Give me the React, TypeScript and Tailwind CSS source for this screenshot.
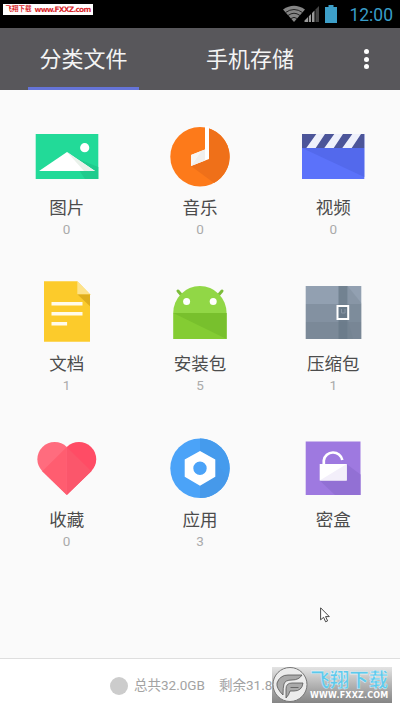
import React from "react";

const sans = "font-['Roboto','Noto_Sans_CJK_SC',sans-serif]";

const PictureIcon = () => (
  <svg viewBox="0 0 64 64" className="size-16">
    <path d="M.7 9h62.6v45H.7z" fill="#22da98" />
    <path d="M32 27l11 7 20.3 8v12H50z" fill="#1fcb8d" />
    <path d="M32 27L4 46h56z" fill="#fff" />
    <path d="M32 27l28 19H49z" fill="#e9f1ea" />
    <circle cx="49.7" cy="22.7" r="4.6" fill="#fff" />
  </svg>
);

const MusicIcon = () => (
  <svg viewBox="0 0 64 64" className="size-16">
    <circle cx="32" cy="31.7" r="29.7" fill="#fd7a1a" />
    <path d="M41 3.5A29.7 29.7 0 0 1 46 57.9L23 41l18-7z" fill="#ef7019" />
    <path d="M37 1h4v33l-18 7V30l14-5.5z" fill="#fff" />
    <path d="M33 26L23 41l14-5.5V24.5z" fill="#f1efed" />
    <path d="M23 30l10-4-10 15z" fill="#f8f6f4" />
  </svg>
);

const VideoIcon = () => (
  <svg viewBox="0 0 64 64" className="size-16">
    <path d="M1 9h62.3v45H1z" fill="#5b72fa" />
    <path d="M1 23h62.3v29z" fill="#5369ec" />
    <path d="M1 9h62.3v14H1z" fill="#4c5599" />
    <path d="M15.3 9H24l-9.3 14H5.3zM33.3 9H42l-9.3 14h-9.4zM51.3 9H60l-9.3 14h-9.4z" fill="#eef0fb" />
  </svg>
);

const DocumentIcon = () => (
  <svg viewBox="0 0 64 64" className="size-16">
    <path d="M9 .3h33.3l12.7 13v47.4H9z" fill="#fccb2b" />
    <path d="M42.3 13.3H55v12z" fill="#dfae1d" />
    <path d="M42.3.3l12.7 13H42.3z" fill="#fde28a" />
    <path d="M16.5 20.9h31v3.6h-31zM16.5 31h31v3.6h-31zM16.5 41h15.6v3.6H16.5z" fill="#fffbea" />
  </svg>
);

const PackageIcon = () => (
  <svg viewBox="0 0 64 64" className="size-16">
    <path d="M10 10l6 7M54 10l-6 7" stroke="#7cbc3a" strokeWidth="3" strokeLinecap="round" />
    <path d="M5.2 32a26.7 27 0 0 1 53.4 0z" fill="#91d746" />
    <path d="M5.2 32h53.4v26H5.2z" fill="#84cc33" />
    <path d="M5.2 32h53.4v26z" fill="#78c02d" />
    <circle cx="18.6" cy="20.5" r="3.5" fill="#fff" />
    <circle cx="45.2" cy="20.5" r="3.5" fill="#fff" />
  </svg>
);

const ArchiveIcon = () => (
  <svg viewBox="0 0 64 64" className="size-16">
    <path d="M4.7 5h55.6v18H4.7z" fill="#92a0b1" />
    <path d="M4.7 23h55.6v18H4.7z" fill="#8391a1" />
    <path d="M4.7 41h55.6v17H4.7z" fill="#7b8998" />
    <path d="M37.5 5h9v53h-9z" fill="#677887" opacity=".75" />
    <path d="M46.5 5l13.8 17v36H46.5z" fill="#718290" opacity=".3" />
    <path d="M46.5 38L52 58h-5.5z" fill="#718290" opacity=".5" />
    <path d="M36.5 25h10.7v13H36.5z" fill="#687988" stroke="#fff" strokeWidth="2" />
    <path d="M40.5 28v4H44v-4" fill="none" stroke="#8795a3" />
  </svg>
);

const HeartIcon = () => (
  <svg viewBox="0 0 64 64" className="size-16">
    <path d="M31.8 10.1A17 17 0 0 0 7.3 34.2L31.8 58z" fill="#ff6c7e" />
    <path d="M31.8 10.1A17 17 0 0 1 56.3 34.2L31.8 58z" fill="#ff4c65" />
    <path d="M31.8 10.1L7.3 34.2 31.8 58z" fill="#ff5d70" />
    <path d="M31.8 10.1l24.5 24.1L31.8 58z" fill="#fb566b" />
  </svg>
);

const AppsIcon = () => (
  <svg viewBox="0 0 64 64" className="size-16">
    <circle cx="32" cy="31.3" r="29.7" fill="#4ba3f8" />
    <path d="M32 1.6A29.7 29.7 0 0 1 60 41L47 23 32 14z" fill="#459bed" />
    <path d="M47 22.6L60 41A29.7 29.7 0 0 1 32 61V48z" fill="#4699ea" />
    <path fillRule="evenodd" d="M32 14l15.3 8.5v17.3L32 48.7l-15.3-8.9V22.5zM32 24.6a6.7 6.7 0 1 0 0 13.4 6.7 6.7 0 0 0 0-13.4z" fill="#fff" />
  </svg>
);

const SafeIcon = () => (
  <svg viewBox="0 0 64 64" className="size-16">
    <path d="M4.7 4.6h54.8V58H4.7z" fill="#9e79e0" />
    <path d="M45.5 27l14 10.5V58H34L18.7 43.5z" fill="#9270d4" />
    <path d="M22.8 28v-4.5a9.4 9.4 0 0 1 18.5-.5" fill="none" stroke="#fff" strokeWidth="2.7" />
    <path d="M18.7 27h27v16.5h-27z" fill="#fff" />
    <path d="M45.7 27v16.5h-27z" fill="#f3effa" />
  </svg>
);

interface Category {
  label: string;
  count?: number;
  icon: React.ReactNode;
}

const categories: Category[] = [
  { label: "图片", count: 0, icon: <PictureIcon /> },
  { label: "音乐", count: 0, icon: <MusicIcon /> },
  { label: "视频", count: 0, icon: <VideoIcon /> },
  { label: "文档", count: 1, icon: <DocumentIcon /> },
  { label: "安装包", count: 5, icon: <PackageIcon /> },
  { label: "压缩包", count: 1, icon: <ArchiveIcon /> },
  { label: "收藏", count: 0, icon: <HeartIcon /> },
  { label: "应用", count: 3, icon: <AppsIcon /> },
  { label: "密盒", icon: <SafeIcon /> },
];

function StatusBar() {
  return (
    <div className="flex h-7 shrink-0 items-start justify-between bg-black pr-[7px] pl-[3px]">
      <div className="mt-1 flex h-[11px] w-[90px] items-center justify-center gap-[3px] bg-white leading-none whitespace-nowrap text-[#d8282c]">
        <span className="text-[6.5px] font-bold">飞翔下载</span>
        <span className="font-['DejaVu_Sans'] text-[7.5px] font-bold tracking-[-0.8px]">www.FXXZ.com</span>
      </div>
      <div className="flex h-7 items-center">
        <svg viewBox="0 0 38 18" className="h-[18px] w-[38px]">
          <path d="M0 4.5Q11 -3 22 4.5L11 17z" fill="#858585" />
          <path d="M2.5 7.5Q11 1.5 19.5 7.5M5 10.5q6-4.5 12 0M8 13.5q3-2.3 6 0" fill="none" stroke="#222" strokeWidth="1" />
          <path d="M36 1v16h-3.5V4.5z" fill="#444" />
          <path d="M31.5 5.5V17H29V8zM28 9v8h-2.2v-5.8zM25 12v5h-3.5v-1.5z" fill="#999" />
        </svg>
        <svg viewBox="0 0 12 18" className="ml-1 h-[18px] w-3">
          <path d="M3.5 0h5v2H12v16H0V2h3.5z" fill="#3d9fc9" />
        </svg>
        <span className="ml-2.5 w-[46px] pt-px text-right text-[17.5px] leading-7 text-[#389dc8]">12:00</span>
      </div>
    </div>
  );
}

function TabBar() {
  return (
    <header className="flex h-[62px] shrink-0 bg-[#58575b] text-[22px] text-[#f4f4f4]">
      <div className="ml-7 flex w-[111px] flex-col">
        <span className="flex h-[59px] items-center justify-center pt-[3px]">分类文件</span>
        <span className="h-[3px] bg-[#6574d8]" />
      </div>
      <span className="ml-14 flex h-[59px] w-[110px] items-center justify-center pt-[3px]">手机存储</span>
      <div className="ml-[59px] flex h-[62px] w-[5px] flex-col items-center justify-center gap-[2.5px]">
        <i className="size-[5px] rounded-full bg-white" />
        <i className="size-[5px] rounded-full bg-white" />
        <i className="size-[5px] rounded-full bg-white" />
      </div>
    </header>
  );
}

function Watermark() {
  return (
    <div className="absolute right-[8px] bottom-[9px] flex h-[36px] w-[120px] items-center bg-linear-to-b from-[#e4e4e4] to-[#858585]">
      <svg viewBox="0 0 36 36" className="size-9 shrink-0">
        <circle cx="18" cy="17.5" r="17" fill="#ececec" stroke="#777" />
        <path d="M5 16q3-8 11-8h14q-3 5-10 5-7 0-8 4-1 3-1 11Q4 21 5 16z" fill="#aaa" stroke="#555" strokeWidth=".8" />
        <path d="M14 31V22q0-6 6-6h11q-1 8-9 8h-4q-1 4-4 7zM18.5 20.5h8" fill="#aaa" stroke="#555" strokeWidth=".8" />
      </svg>
      <div className="flex flex-col items-center pl-0.5">
        <span className="h-[22px] text-[19.5px] leading-[23px] font-bold whitespace-nowrap text-[#5dc9ec] [-webkit-text-stroke:0.3px_white]">飞翔下载</span>
        <span className="h-[10px] font-['DejaVu_Sans'] text-[8px] leading-[10px] font-bold tracking-[0.2px] text-white">WWW.FXXZ.COM</span>
      </div>
    </div>
  );
}

export default function App() {
  return (
    <div className={`relative flex h-[712px] w-[400px] flex-col overflow-hidden bg-[#fafafa] ${sans}`}>
      <StatusBar />
      <TabBar />
      <main className="grid flex-1 auto-rows-[156px] grid-cols-3">
        {categories.map(({ label, count, icon }) => (
          <div key={label} className="flex flex-col items-center pt-[35px]">
            {icon}
            <span className="mt-[7px] h-6 text-[17.5px] leading-6 text-[#4c4c4c]">{label}</span>
            <span className="mt-px h-4 text-[13.5px] leading-4 text-[#aaa]">{count}</span>
          </div>
        ))}
      </main>
      <footer className="flex h-[54px] shrink-0 items-center border-t border-[#dedede] bg-white pl-[110px] text-[13.5px] whitespace-nowrap text-[#a3a3a3]">
        <i className="mr-[6px] size-[18px] rounded-full bg-[#ccc]" />
        <span className="w-[85px]">总共32.0GB</span>
        <span>剩余31.8GB</span>
      </footer>
      <Watermark />
      <svg viewBox="0 0 10 16" className="absolute top-[607px] left-[320px] h-4 w-2.5">
        <path d="M.6.8v12l3-2.5 2 4.5 2-.9-2-4.3h3.7z" fill="#fff" stroke="#333" strokeWidth=".9" />
      </svg>
    </div>
  );
}
